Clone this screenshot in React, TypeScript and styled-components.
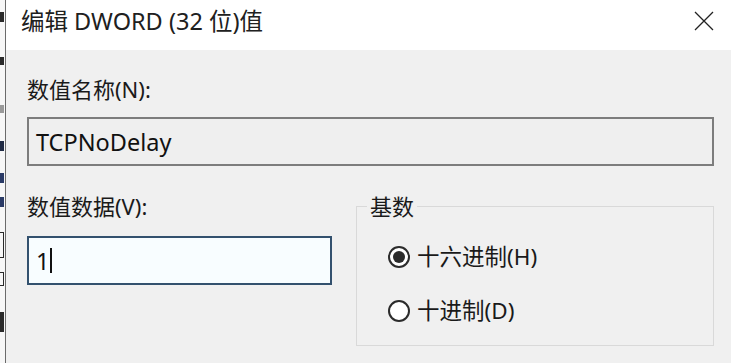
import styled, { createGlobalStyle } from "styled-components";

const GlobalStyle = createGlobalStyle`
  html, body {
    margin: 0;
    padding: 0;
    background: #ffffff;
  }
  body {
    font-family: "Noto Sans", "Noto Sans CJK SC", sans-serif;
    color: #1a1a1a;
  }
`;

const Screen = styled.div`
  display: flex;
  width: 731px;
  height: 363px;
  overflow: hidden;
`;

/* sliver of the window behind the dialog */
const Behind = styled.div`
  width: 5px;
  flex: none;
  display: flex;
  flex-direction: column;
  background: #f7f7f7;
`;

const Scrap = styled.span<{ $top: number; $h: number; $color?: string; $hollow?: boolean }>`
  display: block;
  margin-top: ${(p) => p.$top}px;
  height: ${(p) => p.$h}px;
  width: 4px;
  background: ${(p) => (p.$hollow ? "transparent" : p.$color ?? "#2a2a2a")};
  border: ${(p) => (p.$hollow ? "1px solid #2a2a2a" : "none")};
  border-left: none;
  box-sizing: border-box;
`;

const Dialog = styled.div`
  flex: 1;
  display: flex;
  flex-direction: column;
  border-left: 1px solid #6b6b6b;
  background: #f0f0f0;
`;

const TitleBar = styled.div`
  height: 50px;
  flex: none;
  display: flex;
  align-items: center;
  justify-content: space-between;
  padding: 0 15px 8px 15px;
  box-sizing: border-box;
  background: #ffffff;
`;

const Title = styled.div`
  font-size: 23.5px;
  line-height: 30px;
  color: #202020;
`;

const CloseButton = styled.button`
  width: 24px;
  height: 24px;
  padding: 0;
  border: none;
  background: transparent;
  display: flex;
  align-items: center;
  justify-content: center;
`;

const Body = styled.div`
  flex: 1;
  display: flex;
  flex-direction: column;
  padding: 25px 17px 0 21px;
`;

const Label = styled.div`
  font-size: 22px;
  line-height: 28px;
  color: #1a1a1a;
`;

const TextBox = styled.div<{ $focused?: boolean }>`
  height: 49px;
  box-sizing: border-box;
  display: flex;
  align-items: center;
  padding-left: 7px;
  font-size: 23.5px;
  border: ${(p) => (p.$focused ? "2px solid #33516e" : "2px solid #7d7d7d")};
  background: ${(p) => (p.$focused ? "#f8fdff" : "#efefef")};
  color: #111;
`;

const Caret = styled.span`
  display: inline-block;
  width: 2px;
  height: 25px;
  margin-left: 1px;
  background: #111;
`;

const NameBox = styled(TextBox)`
  margin-top: 14px;
`;

const Row = styled.div`
  display: flex;
  align-items: flex-start;
  margin-top: 26px;
  gap: 24px;
`;

const DataColumn = styled.div`
  width: 305px;
  flex: none;
  display: flex;
  flex-direction: column;
  gap: 16px;
`;

const GroupBox = styled.fieldset`
  flex: 1;
  margin: 0;
  padding: 0 0 20px 31px;
  border: 1px solid #d9d9d9;
  min-width: 0;
`;

const Legend = styled.legend`
  font-size: 22px;
  line-height: 28px;
  padding: 0 3px;
  margin-left: -21px;
  color: #1a1a1a;
`;

const RadioList = styled.div`
  display: flex;
  flex-direction: column;
  gap: 26px;
  padding-top: 23px;
`;

const RadioRow = styled.label`
  display: flex;
  align-items: center;
  gap: 7px;
  font-size: 22.5px;
  line-height: 28px;
`;

const RadioMark = styled.span<{ $checked?: boolean }>`
  width: 22px;
  height: 22px;
  box-sizing: border-box;
  border-radius: 50%;
  border: 2px solid #2b2b2b;
  background: #ffffff;
  display: flex;
  align-items: center;
  justify-content: center;
  &::after {
    content: "";
    width: 12px;
    height: 12px;
    border-radius: 50%;
    background: ${(p) => (p.$checked ? "#2b2b2b" : "transparent")};
  }
`;

const Radio = ({ checked, children }: { checked?: boolean; children: string }) => (
  <RadioRow>
    <RadioMark $checked={checked} />
    {children}
  </RadioRow>
);

export default function App() {
  return (
    <>
      <GlobalStyle />
      <Screen>
        <Behind>
          <Scrap $top={12} $h={10} />
          <Scrap $top={35} $h={8} />
          <Scrap $top={40} $h={8} $color="#9a9a9a" />
          <Scrap $top={28} $h={10} $color="#1f2a44" />
          <Scrap $top={22} $h={10} $color="#2a3a66" />
          <Scrap $top={14} $h={10} $color="#2a3a66" />
          <Scrap $top={25} $h={26} $hollow />
          <Scrap $top={14} $h={14} $hollow />
          <Scrap $top={26} $h={20} />
        </Behind>
        <Dialog>
          <TitleBar>
            <Title>编辑 DWORD (32 位)值</Title>
            <CloseButton aria-label="关闭">
              <svg width="20" height="20" viewBox="0 0 20 20">
                <path d="M1 1 L19 19 M19 1 L1 19" stroke="#222" strokeWidth="1.3" fill="none" />
              </svg>
            </CloseButton>
          </TitleBar>
          <Body>
            <Label>数值名称(N):</Label>
            <NameBox>TCPNoDelay</NameBox>
            <Row>
              <DataColumn>
                <Label>数值数据(V):</Label>
                <TextBox $focused>
                  1
                  <Caret />
                </TextBox>
              </DataColumn>
              <GroupBox>
                <Legend>基数</Legend>
                <RadioList>
                  <Radio checked>十六进制(H)</Radio>
                  <Radio>十进制(D)</Radio>
                </RadioList>
              </GroupBox>
            </Row>
          </Body>
        </Dialog>
      </Screen>
    </>
  );
}
